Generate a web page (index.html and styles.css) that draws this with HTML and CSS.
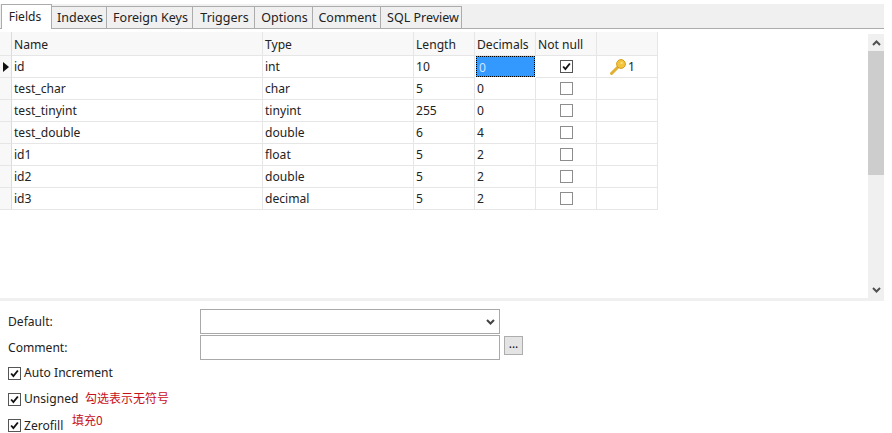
FILE: index.html
```html
<!DOCTYPE html>
<html lang="en">
<head>
<meta charset="utf-8">
<title>Fields</title>
<link rel="stylesheet" href="styles.css">
</head>
<body>
<div class="app">
  <div class="tabs">
    <div class="tab active">Fields</div>
    <div class="tab t-idx">Indexes</div>
    <div class="tab t-fk">Foreign Keys</div>
    <div class="tab t-trg">Triggers</div>
    <div class="tab t-opt">Options</div>
    <div class="tab t-com">Comment</div>
    <div class="tab t-sql">SQL Preview</div>
  </div>
  <div class="upper">
    <div class="grid">
      <div class="row head">
        <div class="c h"></div><div class="c">Name</div><div class="c">Type</div><div class="c">Length</div><div class="c">Decimals</div><div class="c">Not null</div><div class="c"></div>
      </div>
      <div class="row">
        <div class="c h"><span class="arrow"></span></div><div class="c">id</div><div class="c">int</div><div class="c">10</div>
        <div class="c sel"><span class="seltext">0</span></div>
        <div class="c chk"><span class="box on"><svg viewBox="0 0 13 13" class="tick"><path d="M2.5 6.5 L5.2 9.6 L10.5 3"/></svg></span></div>
        <div class="c keycell">
          <svg class="key" viewBox="0 0 18 18" width="18" height="18"><path class="shaft" d="M2.5 15.5 L9.5 8.5"/><circle class="bow" cx="12" cy="6" r="4.4"/><circle class="hole" cx="12.6" cy="5" r="1.1"/></svg><span>1</span>
        </div>
      </div>
      <div class="row"><div class="c h"></div><div class="c">test_char</div><div class="c">char</div><div class="c">5</div><div class="c">0</div><div class="c chk"><span class="box"></span></div><div class="c"></div></div>
      <div class="row"><div class="c h"></div><div class="c">test_tinyint</div><div class="c">tinyint</div><div class="c">255</div><div class="c">0</div><div class="c chk"><span class="box"></span></div><div class="c"></div></div>
      <div class="row"><div class="c h"></div><div class="c">test_double</div><div class="c">double</div><div class="c">6</div><div class="c">4</div><div class="c chk"><span class="box"></span></div><div class="c"></div></div>
      <div class="row"><div class="c h"></div><div class="c">id1</div><div class="c">float</div><div class="c">5</div><div class="c">2</div><div class="c chk"><span class="box"></span></div><div class="c"></div></div>
      <div class="row"><div class="c h"></div><div class="c">id2</div><div class="c">double</div><div class="c">5</div><div class="c">2</div><div class="c chk"><span class="box"></span></div><div class="c"></div></div>
      <div class="row"><div class="c h"></div><div class="c">id3</div><div class="c">decimal</div><div class="c">5</div><div class="c">2</div><div class="c chk"><span class="box"></span></div><div class="c"></div></div>
    </div>
    <div class="scroll">
      <div class="sbtn"><svg viewBox="0 0 9 6" width="9" height="6"><path d="M1 5 L4.5 1.5 L8 5"/></svg></div>
      <div class="thumb"></div>
      <div class="track"></div>
      <div class="sbtn"><svg viewBox="0 0 9 6" width="9" height="6"><path d="M1 1 L4.5 4.5 L8 1"/></svg></div>
    </div>
  </div>
  <div class="lower">
    <div class="form">
      <div class="label">Default:</div>
      <div class="select"><svg viewBox="0 0 9 6" width="9" height="6"><path d="M1 1 L4.5 4.5 L8 1"/></svg></div>
      <div class="label">Comment:</div>
      <div class="inputrow"><div class="input"></div><div class="dots">...</div></div>
    </div>
    <div class="opt"><span class="box on"><svg viewBox="0 0 13 13" class="tick"><path d="M2.5 6.5 L5.2 9.6 L10.5 3"/></svg></span>Auto Increment</div>
    <div class="opt"><span class="box on"><svg viewBox="0 0 13 13" class="tick"><path d="M2.5 6.5 L5.2 9.6 L10.5 3"/></svg></span>Unsigned<span class="note n1">勾选表示无符号</span></div>
    <div class="opt"><span class="box on"><svg viewBox="0 0 13 13" class="tick"><path d="M2.5 6.5 L5.2 9.6 L10.5 3"/></svg></span>Zerofill<span class="note n2">填充0</span></div>
  </div>
</div>
</body>
</html>
```

FILE: styles.css
```css
* { box-sizing: border-box; }
html, body { margin: 0; padding: 0; background: #fff; }
body {
  width: 892px; height: 433px; overflow: hidden;
  font-family: "Noto Sans", "Open Sans", "Noto Sans CJK SC", sans-serif;
  font-size: 12.1px; color: #222;
}
.app { width: 884px; padding-top: 4px; }
.tabs {
  display: flex; align-items: flex-end; height: 25px; font-size: 12.5px;
  background: #f0f0f0; border-bottom: 1px solid #acacac;
}
.tab {
  height: 22px; background: #f0f0f0; border: 1px solid #acacac; border-bottom: 0;
  margin-left: -1px; padding-left: 2px; text-align: center; line-height: 21px; white-space: nowrap;
}
.tab.active {
  width: 51px; height: 25px; margin: 0 0 -1px 1px; padding: 0 3px 0 0; background: #fff;
  line-height: 23px; font-size: 12.1px; position: relative;
}
.t-idx { width: 56px; }
.t-fk { width: 87px; }
.t-trg { width: 63px; }
.t-opt { width: 59px; }
.t-com { width: 69px; }
.t-sql { width: 82px; padding-left: 4px; }

.upper { display: flex; height: 269px; padding-top: 3px; }
.grid { width: 868px; }
.row {
  display: grid;
  grid-template-columns: 12px 251px 151px 61px 61px 61px 61px;
  width: 658px; height: 22px;
}
.row.head { height: 24px; background: #f8f8f8; }
.c {
  border-right: 1px solid #e6e6e6; border-bottom: 1px solid #e6e6e6;
  padding-left: 2px; line-height: 21px; white-space: nowrap; overflow: hidden;
}
.head .c { line-height: 25px; }
.c.h { padding: 0; background: #f8f8f8; display: flex; align-items: center; border-right: 1px solid #dcdcdc; }
.arrow {
  margin-left: 3px; width: 0; height: 0;
  border-left: 6px solid #111; border-top: 5px solid transparent; border-bottom: 5px solid transparent;
}
.sel {
  padding: 0; border: 1px dotted #000; background: #3399ff; color: #cfe6ff;
  margin: 0 1px 0 1px; height: 21px;
}
.seltext { padding-left: 2px; }
.chk { display: flex; align-items: center; justify-content: center; padding: 0 0 1px 0; }
.box {
  display: inline-flex; width: 13px; height: 13px; flex: none;
  border: 1px solid #8d8d8d; background: #fff;
}
.box.on { border-color: #555; }
.tick { width: 11px; height: 11px; }
.tick path { fill: none; stroke: #111; stroke-width: 2.2; }
.keycell { display: flex; align-items: center; padding-left: 12px; }
.keycell span { margin-left: 1px; }
.key { flex: none; }
.shaft { stroke: #e2b030; stroke-width: 3; stroke-linecap: round; fill: none; }
.bow { fill: #f4c53c; stroke: #d59c1c; stroke-width: 1; }
.hole { fill: #fbe694; }

.scroll { width: 16px; margin-top: 2px; display: flex; flex-direction: column; background: #f0f0f0; }
.sbtn { height: 17px; display: flex; align-items: center; justify-content: center; }
.sbtn path { fill: none; stroke: #505050; stroke-width: 2; }
.thumb { height: 124px; background: #cdcdcd; }
.track { flex: 1; }

.lower {
  border-top: 3px solid #f0f0f0; height: 135px; padding: 8px 0 0 8px;
}
.form {
  display: grid; grid-template-columns: 192px 1fr; grid-auto-rows: 26px;
  align-items: start; margin-bottom: -1px;
}
.label { line-height: 25px; }
.select {
  width: 300px; height: 25px; border: 1px solid #a9a9a9; background: #fff;
  display: flex; align-items: center; justify-content: flex-end; padding-right: 4px;
}
.select path { fill: none; stroke: #444; stroke-width: 2; }
.inputrow { display: flex; align-items: flex-start; gap: 4px; }
.input { width: 300px; height: 25px; border: 1px solid #a9a9a9; background: #fff; }
.dots {
  width: 19px; height: 19px; margin-top: 1px; border: 1px solid #adadad; background: #e4e4e4;
  text-align: center; line-height: 14px; font-size: 12px; color: #111;
}
.opt { display: flex; align-items: center; height: 26px; line-height: 16px; position: relative; }
.opt:last-child { padding-top: 1px; }
.opt .box { margin-right: 3px; }
.note {
  font-family: "Noto Sans CJK SC", sans-serif; font-size: 12px; color: #c8101a;
  position: absolute;
}
.n1 { left: 77px; top: 4px; }
.n2 { left: 64px; top: 0; }
```
